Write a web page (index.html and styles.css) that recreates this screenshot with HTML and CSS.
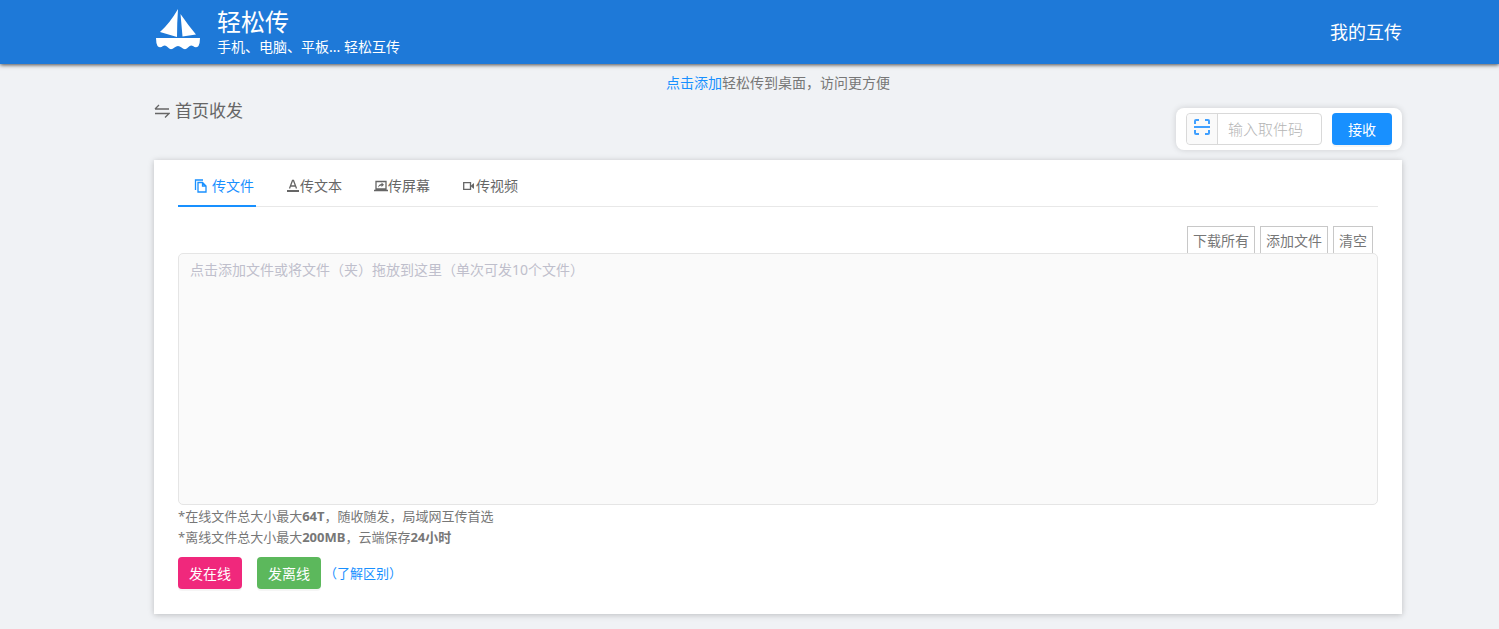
FILE: index.html
```html
<!DOCTYPE html>
<html lang="zh-CN">
<head>
<meta charset="utf-8">
<meta name="viewport" content="width=device-width, initial-scale=1">
<title>轻松传</title>
<link rel="stylesheet" href="styles.css">
</head>
<body>
<header class="header">
  <div class="brand">
    <svg class="logo" viewBox="0 0 46 42" aria-hidden="true">
      <path d="M23 0Q22 14 22 28L5 23Q15 14 23 0ZM25.500 5Q33 16 41 25.500L27.500 27.500Z"/>
      <path d="M1 29H45Q45 34 43.500 37Q41 39.500 38 37Q35.500 35.500 33.500 38Q30.500 42 26.500 38.500Q23 35.500 19.500 38.500Q15.500 42 12.500 38Q10.500 35.500 8 37Q5 39.500 2.500 37Q1 34 1 29Z"/>
    </svg>
    <div>
      <h1 class="brand-name">轻松传</h1>
      <p class="brand-slogan">手机、电脑、平板... 轻松互传</p>
    </div>
  </div>
  <a class="header-link" href="#mine">我的互传</a>
</header>

<main class="page">
  <p class="notice"><a href="#add">点击添加</a>轻松传到桌面，访问更方便</p>
  <div class="toolbar">
    <h2 class="page-title">
      <svg class="swap-icon" viewBox="0 0 16 16" aria-hidden="true"><path d="M1 6H15M1 6L5 2M1 10.500H15L11 14.500"/></svg>
      首页收发
    </h2>
    <form class="receive">
      <div class="code-group">
        <button class="scan" type="button" aria-label="扫码">
          <svg viewBox="0 0 18 18" aria-hidden="true"><path d="M2 6V3Q2 2 3 2H6M12 2H15Q16 2 16 3V6M1 9H17M2 12V15Q2 16 3 16H6M12 16H15Q16 16 16 15V12"/></svg>
        </button>
        <input class="code-input" type="text" placeholder="输入取件码" aria-label="取件码">
      </div>
      <button class="btn btn-blue" type="button">接收</button>
    </form>
  </div>

  <section class="card">
    <div class="tabs" role="tablist">
      <button class="tab tab-active" role="tab" aria-selected="true">
        <svg class="tab-icon" viewBox="0 0 14 14" aria-hidden="true"><path d="M1.500 11V1H9M4 3.500H8.500L12 7V13H4ZM8.500 3.500V7H12"/></svg>传文件</button>
      <button class="tab" role="tab" aria-selected="false">
        <svg class="tab-icon" viewBox="0 0 14 14" aria-hidden="true"><path d="M3.500 9.500L6.500 1.500H7.500L10.500 9.500M4.500 7H9.500"/><path class="solid" d="M1 11H13V13H1Z"/></svg>传文本</button>
      <button class="tab" role="tab" aria-selected="false">
        <svg class="tab-icon" viewBox="0 0 14 14" aria-hidden="true"><path d="M2 2.500H12V10H2ZM0 11.500H14"/><path class="solid" d="M4 8.500Q4.500 5.200 7.500 5V3.500L10 5.800L7.500 8V6.500Q5.500 6.500 4 8.500Z"/></svg>传屏幕</button>
      <button class="tab" role="tab" aria-selected="false">
        <svg class="tab-icon" viewBox="0 0 14 14" aria-hidden="true"><path d="M1.700 3.700H8.500V10.300H1.700Z"/><path class="solid" d="M9 6.500L12 4V10L9 7.500Z"/></svg>传视频</button>
    </div>

    <div class="file-actions">
      <button class="file-btn" type="button">下载所有</button>
      <button class="file-btn" type="button">添加文件</button>
      <button class="file-btn" type="button">清空</button>
    </div>
    <button class="dropzone" type="button">点击添加文件或将文件（夹）拖放到这里（单次可发10个文件）</button>

    <p class="hint">*在线文件总大小最大<strong>64T</strong>，随收随发，局域网互传首选</p>
    <p class="hint">*离线文件总大小最大<strong>200MB</strong>，云端保存<strong>24小时</strong></p>
    <div class="send">
      <button class="btn btn-pink" type="button">发在线</button>
      <button class="btn btn-green" type="button">发离线</button>
      <a class="send-help" href="#diff">（了解区别）</a>
    </div>
  </section>
</main>
</body>
</html>
```

FILE: styles.css
```css
* {
  box-sizing: border-box;
}

body {
  margin: 0;
  background: #f0f2f5;
  color: #777;
  font: 14px/22px "Noto Sans", "Noto Sans CJK SC", sans-serif;
}

h1, h2, p {
  margin: 0;
  font-weight: 400;
}

button, input {
  font: inherit;
}

button {
  cursor: pointer;
}

a {
  color: #1890ff;
  text-decoration: none;
}

svg {
  flex: none;
  fill: none;
  stroke: currentColor;
}

.header {
  display: flex;
  align-items: center;
  justify-content: space-between;
  height: 64px;
  padding: 0 97px 0 155px;
  background: #1e79d8;
  box-shadow: 0 1px 4px rgba(0, 0, 0, 0.7);
  color: #fff;
}

.brand {
  display: flex;
  align-self: flex-start;
  gap: 16px;
  padding-top: 5px;
}

.logo {
  width: 46px;
  height: 42px;
  margin-top: 4px;
  fill: #fff;
  stroke: none;
}

.brand-name {
  font-size: 24px;
  line-height: 34px;
}

.brand-slogan {
  line-height: 16px;
}

.header-link {
  color: #fff;
  font-size: 18px;
}

.page {
  padding: 8px 97px 15px 154px;
}

.notice {
  text-align: center;
}

.toolbar {
  display: flex;
  align-items: flex-start;
  justify-content: space-between;
  margin-bottom: 10px;
}

.page-title {
  display: flex;
  align-items: center;
  gap: 5px;
  padding-top: 6px;
  color: #666;
  font-size: 17px;
}

.swap-icon {
  width: 16px;
  height: 16px;
  stroke-width: 1.3;
}

.receive {
  display: flex;
  gap: 10px;
  margin-top: 14px;
  padding: 5px 10px;
  border-radius: 8px;
  background: #fff;
  box-shadow: 0 0 6px rgba(0, 0, 0, 0.15);
}

.code-group {
  display: flex;
  width: 136px;
  height: 32px;
  border: 1px solid #d9d9d9;
  border-radius: 4px;
}

.scan {
  flex: none;
  width: 31px;
  padding: 0;
  border: 0;
  border-right: 1px solid #d9d9d9;
  border-radius: 4px 0 0 4px;
  background: #fafafa;
  color: #40a0ff;
}

.scan svg {
  display: block;
  width: 18px;
  height: 18px;
  margin: 0 auto 4px;
  stroke-width: 2;
}

.code-input {
  flex: 1;
  min-width: 0;
  padding: 0 10px;
  border: 0;
  background: none;
  font-size: 15px;
}

.code-input::placeholder {
  color: #b5b5b5;
  font-weight: 300;
}

.btn {
  height: 32px;
  padding: 2px 11px 0;
  border: 0;
  border-radius: 4px;
  box-shadow: 0 2px 0 rgba(0, 0, 0, 0.04);
  color: #fff;
}

.btn-blue {
  padding: 2px 16px 0;
  background: #1890ff;
}

.btn-pink {
  background: #f0287c;
}

.btn-green {
  background: #5cb85c;
}

.card {
  padding: 4px 24px 25px;
  background: #fff;
  box-shadow: 0 1px 6px rgba(0, 0, 0, 0.22);
}

.tabs {
  display: flex;
  border-bottom: 1px solid #e8e8e8;
}

.tab {
  display: flex;
  align-items: center;
  position: relative;
  height: 42px;
  padding: 2px 16px 0;
  border: 0;
  background: none;
  color: #666;
}

.tab-active {
  gap: 4px;
  color: #1890ff;
}

.tab-active::after {
  content: "";
  position: absolute;
  bottom: -1px;
  left: 0;
  width: 78px;
  height: 2px;
  background: #1890ff;
}

.tab-icon {
  width: 14px;
  height: 14px;
  stroke-width: 1.3;
}

.solid {
  fill: currentColor;
  stroke: none;
}

.file-actions {
  display: flex;
  justify-content: flex-end;
  gap: 5px;
  margin-top: 19px;
  padding-right: 5px;
}

.file-btn {
  height: 27px;
  padding: 2px 5px 0;
  border: 1px solid #c8c8c8;
  border-bottom: 0;
  background: #fff;
  color: #777;
}

.dropzone {
  display: flex;
  align-items: flex-start;
  width: 100%;
  min-height: 252px;
  padding: 5px 11px;
  border: 1px solid #e5e5e5;
  border-radius: 5px;
  background: #fafafa;
  color: #bfbfcc;
  text-align: left;
}

.hint {
  font-size: 13px;
  line-height: 21px;
}

.dropzone + .hint {
  margin-top: 1px;
}

.send {
  display: flex;
  align-items: center;
  gap: 15px;
  margin-top: 9px;
}

.send-help {
  margin-left: -12px;
  font-size: 13px;
}
```
